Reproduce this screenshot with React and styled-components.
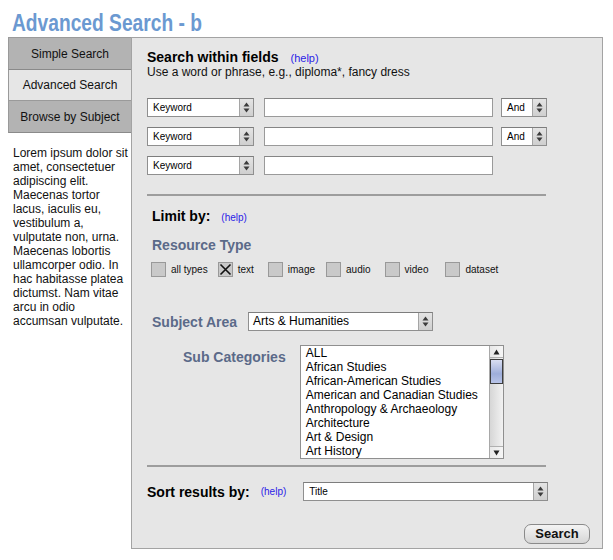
import React from "react";
import styled, { createGlobalStyle } from "styled-components";

const Global = createGlobalStyle`
  html, body { margin: 0; padding: 0; background: #fff; }
  body { font-family: "Liberation Sans", Arial, Helvetica, sans-serif; color: #000; }
  * { box-sizing: border-box; }
`;

const Page = styled.div`
  width: 613px;
  height: 560px;
  padding: 8px 10px 0 8px;
`;

const Title = styled.h1`
  margin: 0 0 0 4px;
  height: 29px;
  line-height: 29px;
  font-size: 24px;
  font-weight: bold;
  color: #6b99d1;
  white-space: nowrap;
`;

const TitleText = styled.span`
  display: inline-block;
  transform: scaleX(0.8);
  transform-origin: left center;
`;

const Layout = styled.div`
  display: flex;
  align-items: flex-start;
`;

const Sidebar = styled.div`
  width: 123px;
  flex: none;
`;

const Tabs = styled.div`
  display: flex;
  flex-direction: column;
  border-top: 1px solid #9a9a9a;
`;

const Tab = styled.div`
  height: ${(p) => (p.$h || 32)}px;
  display: flex;
  align-items: center;
  justify-content: center;
  font-size: 12px;
  color: #111;
  background: ${(p) => (p.$active ? "#e6e6e6" : "#b3b3b3")};
  border-left: 1px solid #9a9a9a;
  border-bottom: 1px solid ${(p) => (p.$active ? "#9a9a9a" : "#8a8a8a")};
`;

const Blurb = styled.p`
  margin: 13px 0 0 0;
  padding: 0 0 0 5px;
  font-size: 12px;
  line-height: 14px;
  color: #111;
`;

const Panel = styled.div`
  width: 472px;
  height: 512px;
  border: 1px solid #a3a3a3;
  background: #e6e6e6;
  padding: 11px 12px 0 15px;
  display: flex;
  flex-direction: column;
`;

const HeadRow = styled.div`
  display: flex;
  align-items: baseline;
  gap: ${(p) => p.$gap || 12}px;
  padding-left: ${(p) => p.$indent || 0}px;
  margin-top: ${(p) => p.$mt || 0}px;
`;

const Heading = styled.span`
  font-size: 14px;
  line-height: 16px;
  font-weight: bold;
  color: ${(p) => (p.$slate ? "#5b6a89" : "#000")};
  white-space: nowrap;
`;

const Help = styled.a`
  font-size: ${(p) => p.$size || 11}px;
  color: #2b22e6;
  text-decoration: none;
`;

const Hint = styled.div`
  font-size: 12px;
  line-height: 14px;
  color: #111;
`;

const FieldRows = styled.div`
  display: flex;
  flex-direction: column;
  gap: 10px;
  margin-top: 19px;
`;

const FieldRow = styled.div`
  display: flex;
  align-items: center;
  height: 19px;
`;

const SelectBox = styled.div`
  width: ${(p) => p.$w}px;
  height: ${(p) => p.$h || 19}px;
  margin-left: ${(p) => p.$ml || 0}px;
  flex: none;
  display: flex;
  background: #fff;
  border: 1px solid #8f8f8f;
  border-top-color: #7d7d7d;
`;

const SelectText = styled.span`
  flex: 1;
  padding-left: ${(p) => p.$pl || 5}px;
  font-size: ${(p) => p.$size || 10}px;
  line-height: 17px;
  white-space: nowrap;
  overflow: hidden;
`;

const Arrows = styled.span`
  width: 14px;
  flex: none;
  display: flex;
  align-items: center;
  justify-content: center;
  background: linear-gradient(#e4e4e4, #cfcfcf);
  border-left: 1px solid #a5a5a5;
`;

const TextInput = styled.input`
  width: ${(p) => p.$w}px;
  height: 19px;
  margin-left: 10px;
  flex: none;
  border: 1px solid #9a9a9a;
  border-top-color: #858585;
  background: #fff;
  padding: 0 3px;
  font-size: 11px;
  outline: none;
`;

const Divider = styled.hr`
  width: 399px;
  margin: ${(p) => p.$mt}px 0 0 0;
  border: none;
  border-top: 2px solid #9d9d9d;
  height: 0;
`;

const Checks = styled.div`
  display: flex;
  align-items: center;
  margin-top: 9px;
  padding-left: 4px;
  height: 15px;
`;

const CheckItem = styled.label`
  display: flex;
  align-items: center;
  gap: 5px;
  margin-right: ${(p) => p.$mr}px;
  font-size: 10px;
  color: #111;
  white-space: nowrap;
`;

const Box = styled.span`
  width: 15px;
  height: 15px;
  flex: none;
  display: flex;
  align-items: center;
  justify-content: center;
  background: #c9c9c9;
  border: 1px solid #999;
`;

const SubjectRow = styled.div`
  display: flex;
  align-items: center;
  margin-top: 35px;
  padding-left: 5px;
  gap: 11px;
`;

const SubRow = styled.div`
  display: flex;
  align-items: flex-start;
  margin-top: 14px;
  padding-left: 36px;
  gap: 14px;
`;

const SubLabel = styled(Heading)`
  margin-top: 4px;
`;

const ListBox = styled.div`
  width: 204px;
  height: 114px;
  display: flex;
  background: #fff;
  border: 1px solid #8f8f8f;
`;

const ListItems = styled.ul`
  flex: 1;
  margin: 0;
  padding: 0 0 0 5px;
  list-style: none;
  overflow: hidden;
`;

const ListItem = styled.li`
  font-size: 12px;
  line-height: 14px;
  white-space: nowrap;
`;

const Scrollbar = styled.div`
  width: 14px;
  flex: none;
  display: flex;
  flex-direction: column;
  background: linear-gradient(90deg, #d6d6d6, #f2f2f2);
  border-left: 1px solid #a8a8a8;
`;

const ScrollBtn = styled.span`
  height: 12px;
  display: flex;
  align-items: center;
  justify-content: center;
  background: linear-gradient(90deg, #e8e8e8, #f6f6f6);
  border-${(p) => (p.$up ? "bottom" : "top")}: 1px solid #b0b0b0;
`;

const Thumb = styled.span`
  height: 25px;
  margin-top: 1px;
  background: linear-gradient(#d9def2, #9eaedb 60%, #b8c4e8);
  border: 1px solid #3d3d3d;
`;

const Track = styled.span`
  flex: 1;
`;

const SortRow = styled.div`
  display: flex;
  align-items: center;
  margin-top: 15px;
`;

const SortHelp = styled(Help)`
  margin-left: 11px;
`;

const ButtonRow = styled.div`
  display: flex;
  justify-content: flex-end;
  margin-top: 23px;
`;

const SearchButton = styled.button`
  width: 66px;
  height: 20px;
  border: 1px solid #8a8a8a;
  border-radius: 7px;
  background: linear-gradient(#f4f4f4, #d6d6d6);
  font-family: inherit;
  font-size: 13px;
  font-weight: bold;
  color: #111;
  padding: 0;
  line-height: 18px;
`;

const Updown = () => (
  <svg width="7" height="11" viewBox="0 0 7 11">
    <path d="M3.5 0.5 L6.5 4.5 L0.5 4.5 Z" fill="#3c3c3c" />
    <path d="M3.5 10.5 L6.5 6.5 L0.5 6.5 Z" fill="#3c3c3c" />
  </svg>
);

const Select = ({ w, ml, text, size, pl }) => (
  <SelectBox $w={w} $ml={ml}>
    <SelectText $size={size} $pl={pl}>{text}</SelectText>
    <Arrows>
      <Updown />
    </Arrows>
  </SelectBox>
);

const Cross = () => (
  <svg width="13" height="13" viewBox="0 0 13 13">
    <path d="M1.5 1.5 L11.5 11.5 M11.5 1.5 L1.5 11.5" stroke="#111" strokeWidth="1.6" />
  </svg>
);

const Tri = ({ up }) => (
  <svg width="7" height="6" viewBox="0 0 7 6">
    <path d={up ? "M3.5 0.5 L6.5 5.5 L0.5 5.5 Z" : "M3.5 5.5 L6.5 0.5 L0.5 0.5 Z"} fill="#222" />
  </svg>
);

const types = [
  { label: "all types", mr: 10 },
  { label: "text", mr: 14, checked: true },
  { label: "image", mr: 11 },
  { label: "audio", mr: 14 },
  { label: "video", mr: 17 },
  { label: "dataset", mr: 0 },
];

const subs = [
  "ALL",
  "African Studies",
  "African-American Studies",
  "American and Canadian Studies",
  "Anthropology & Archaeology",
  "Architecture",
  "Art & Design",
  "Art History",
];

export default function App() {
  return (
    <>
      <Global />
      <Page>
        <Title>
          <TitleText>Advanced Search - b</TitleText>
        </Title>
        <Layout>
          <Sidebar>
            <Tabs>
              <Tab>Simple Search</Tab>
              <Tab $active $h={31}>Advanced Search</Tab>
              <Tab>Browse by Subject</Tab>
            </Tabs>
            <Blurb>
              Lorem ipsum dolor sit amet, consectetuer adipiscing elit. Maecenas tortor lacus, iaculis eu,
              vestibulum a, vulputate non, urna. Maecenas lobortis ullamcorper odio. In hac habitasse
              platea dictumst. Nam vitae arcu in odio accumsan vulputate.
            </Blurb>
          </Sidebar>
          <Panel>
            <HeadRow>
              <Heading>Search within fields</Heading>
              <Help href="#">(help)</Help>
            </HeadRow>
            <Hint>Use a word or phrase, e.g., diploma*, fancy dress</Hint>
            <FieldRows>
              {[0, 1, 2].map((i) => (
                <FieldRow key={i}>
                  <Select w={107} text="Keyword" />
                  <TextInput $w={229} />
                  {i < 2 && <Select w={46} ml={8} text="And" />}
                </FieldRow>
              ))}
            </FieldRows>
            <Divider $mt={19} />
            <HeadRow $indent={5} $gap={11} $mt={12}>
              <Heading>Limit by:</Heading>
              <Help href="#" $size={10}>(help)</Help>
            </HeadRow>
            <HeadRow $indent={5} $mt={13}>
              <Heading $slate>Resource Type</Heading>
            </HeadRow>
            <Checks>
              {types.map((t) => (
                <CheckItem key={t.label} $mr={t.mr}>
                  <Box>{t.checked && <Cross />}</Box>
                  {t.label}
                </CheckItem>
              ))}
            </Checks>
            <SubjectRow>
              <Heading $slate>Subject Area</Heading>
              <Select w={185} text="Arts & Humanities" size={12} pl={4} />
            </SubjectRow>
            <SubRow>
              <SubLabel $slate>Sub Categories</SubLabel>
              <ListBox>
                <ListItems>
                  {subs.map((s) => (
                    <ListItem key={s}>{s}</ListItem>
                  ))}
                </ListItems>
                <Scrollbar>
                  <ScrollBtn $up>
                    <Tri up />
                  </ScrollBtn>
                  <Thumb />
                  <Track />
                  <ScrollBtn>
                    <Tri />
                  </ScrollBtn>
                </Scrollbar>
              </ListBox>
            </SubRow>
            <Divider $mt={6} />
            <SortRow>
              <Heading>Sort results by:</Heading>
              <SortHelp href="#" $size={10}>(help)</SortHelp>
              <Select w={245} ml={17} text="Title" />
            </SortRow>
            <ButtonRow>
              <SearchButton>Search</SearchButton>
            </ButtonRow>
          </Panel>
        </Layout>
      </Page>
    </>
  );
}
